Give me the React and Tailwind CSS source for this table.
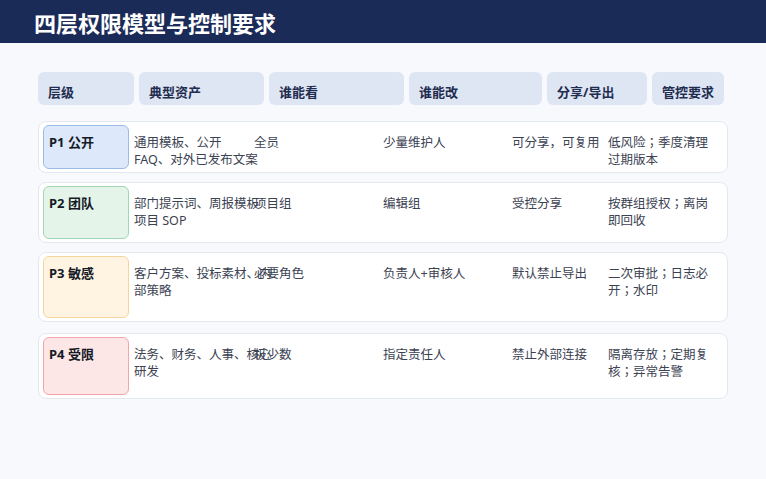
import React from "react";

const rows = [
  {
    tag: "P1 公开",
    badge: "bg-[#dde8fb] border-[#9bbbe8]",
    h: "h-[52px]",
    mt: "mt-0",
    c2: ["通用模板、公开", "FAQ、对外已发布文案"],
    c3: ["全员"],
    c4: ["少量维护人"],
    c5: ["可分享，可复用"],
    c6: ["低风险；季度清理", "过期版本"],
  },
  {
    tag: "P2 团队",
    badge: "bg-[#e4f4e9] border-[#a3d6b2]",
    h: "h-[61px]",
    mt: "mt-[9px]",
    c2: ["部门提示词、周报模板", "项目 SOP"],
    c3: ["项目组"],
    c4: ["编辑组"],
    c5: ["受控分享"],
    c6: ["按群组授权；离岗", "即回收"],
  },
  {
    tag: "P3 敏感",
    badge: "bg-[#fff4e2] border-[#f4d59e]",
    h: "h-[70px]",
    mt: "mt-[9px]",
    c2: ["客户方案、投标素材、内", "部策略"],
    c3: ["必要角色"],
    c4: ["负责人+审核人"],
    c5: ["默认禁止导出"],
    c6: ["二次审批；日志必", "开；水印"],
  },
  {
    tag: "P4 受限",
    badge: "bg-[#fde6e6] border-[#efa7aa]",
    h: "h-[66px]",
    mt: "mt-[11px]",
    c2: ["法务、财务、人事、核心", "研发"],
    c3: ["极少数"],
    c4: ["指定责任人"],
    c5: ["禁止外部连接"],
    c6: ["隔离存放；定期复", "核；异常告警"],
  },
];

const headers = [
  ["层级", "w-[96px]"],
  ["典型资产", "w-[125px]"],
  ["谁能看", "w-[135px]"],
  ["谁能改", "w-[133px]"],
  ["分享/导出", "w-[100px]"],
  ["管控要求", "w-[72px]"],
];

function Cell({ lines, w }) {
  return (
    <div className={`${w} shrink-0 pt-[9px]`}>
      {lines.map((l, i) => (
        <div key={i} className="whitespace-nowrap leading-[17px]">
          {l}
        </div>
      ))}
    </div>
  );
}

export default function App() {
  return (
    <div
      className="w-[766px] h-[479px] overflow-hidden bg-[#f8f9fc]"
      style={{ fontFamily: '"Noto Sans", "Noto Sans CJK JP", sans-serif' }}
    >
      <div className="h-[43px] bg-[#1b2b57] flex items-center pl-[34px]">
        <h1 className="text-white text-[22px] font-bold leading-none pt-[3px]">
          四层权限模型与控制要求
        </h1>
      </div>

      <div className="pl-[38px] pt-[29px]">
        <div className="flex gap-[5px]">
          {headers.map(([t, w]) => (
            <div
              key={t}
              className={`${w} h-[33px] rounded-[6px] bg-[#dfe6f3] pl-[10px] pt-[12px] text-[13px] font-bold text-[#1f2d50] leading-[17px] whitespace-nowrap`}
            >
              {t}
            </div>
          ))}
        </div>

        <div className="mt-[16px] w-[690px]">
          {rows.map((r) => (
            <div
              key={r.tag}
              className={`${r.h} ${r.mt} flex rounded-[8px] border border-[#e3e8ef] bg-white p-[3px] pl-[4px] text-[12.5px] text-[#3b4252]`}
            >
              <div
                className={`w-[86px] shrink-0 rounded-[6px] border ${r.badge} pl-[5px] pt-[8px] text-[13px] font-bold text-[#141a26] leading-[17px] whitespace-nowrap`}
              >
                {r.tag}
              </div>
              <div className="w-[5px] shrink-0" />
              <Cell lines={r.c2} w="w-[120px]" />
              <Cell lines={r.c3} w="w-[129px]" />
              <Cell lines={r.c4} w="w-[129px]" />
              <Cell lines={r.c5} w="w-[96px]" />
              <Cell lines={r.c6} w="w-[110px]" />
            </div>
          ))}
        </div>
      </div>
    </div>
  );
}
